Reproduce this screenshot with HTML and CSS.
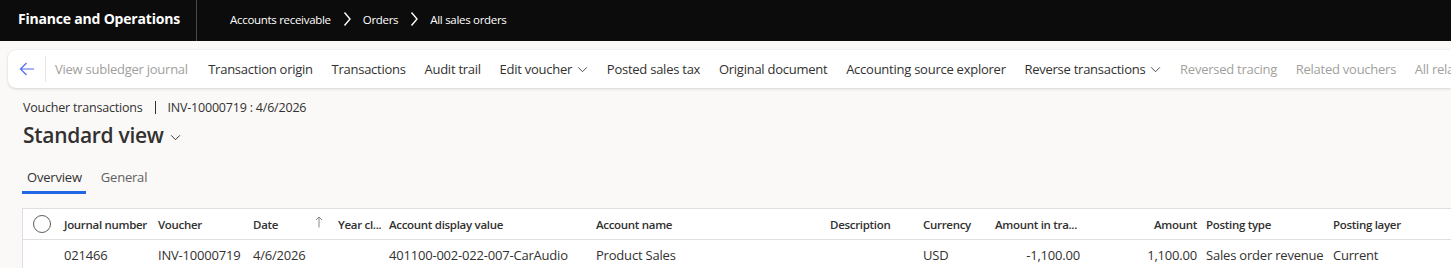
FILE: index.html
```html
<!DOCTYPE html>
<html lang="en">
<head>
<meta charset="utf-8">
<title>Voucher transactions</title>
<link rel="stylesheet" href="styles.css">
</head>
<body>
<header class="topbar">
  <div class="brand">Finance and Operations</div>
  <nav class="crumbs">
    <span>Accounts receivable</span>
    <svg class="crumb-chev" viewBox="0 0 8 16" width="8" height="16"><path d="M1.5 1.5 L7 8 L1.5 14.5" fill="none" stroke="#fff" stroke-width="1.4"/></svg>
    <span>Orders</span>
    <svg class="crumb-chev" viewBox="0 0 8 16" width="8" height="16"><path d="M1.5 1.5 L7 8 L1.5 14.5" fill="none" stroke="#fff" stroke-width="1.4"/></svg>
    <span>All sales orders</span>
  </nav>
</header>

<main class="page">
  <div class="toolbar">
    <button class="back" aria-label="Back">
      <svg viewBox="0 0 16 16" width="16" height="16"><path d="M15 8 H1.5 M7.5 2 L1.5 8 L7.5 14" fill="none" stroke="#4f6bed" stroke-width="1.2"/></svg>
    </button>
    <span class="tb-sep"></span>
    <span class="tb-item first disabled">View subledger journal</span>
    <span class="tb-item">Transaction origin</span>
    <span class="tb-item">Transactions</span>
    <span class="tb-item">Audit trail</span>
    <span class="tb-item">Edit voucher <svg class="dd" viewBox="0 0 12 8" width="11" height="7"><path d="M1 1.5 L6 6.5 L11 1.5" fill="none" stroke="#323130" stroke-width="1"/></svg></span>
    <span class="tb-item">Posted sales tax</span>
    <span class="tb-item">Original document</span>
    <span class="tb-item">Accounting source explorer</span>
    <span class="tb-item">Reverse transactions <svg class="dd" viewBox="0 0 12 8" width="11" height="7"><path d="M1 1.5 L6 6.5 L11 1.5" fill="none" stroke="#323130" stroke-width="1"/></svg></span>
    <span class="tb-item disabled">Reversed tracing</span>
    <span class="tb-item disabled">Related vouchers</span>
    <span class="tb-item disabled">All related vouchers</span>
  </div>

  <section class="head">
    <div class="caption">Voucher transactions <span class="bar" aria-hidden="true"></span> INV-10000719 : 4/6/2026</div>
    <h1 class="title">Standard view <svg class="title-chev" viewBox="0 0 12 8" width="11" height="7"><path d="M1 1.5 L6 6.5 L11 1.5" fill="none" stroke="#323130" stroke-width="1.1"/></svg></h1>
    <div class="tabs">
      <span class="tab active">Overview</span>
      <span class="tab">General</span>
    </div>
  </section>

  <div class="grid">
    <div class="row hdr">
      <div class="cell chk"><span class="circle"></span></div>
      <div class="cell">Journal number</div>
      <div class="cell">Voucher</div>
      <div class="cell date">Date <svg class="sort" viewBox="0 0 8 12" width="8" height="12"><path d="M4 11.5 V1 M1 4 L4 1 L7 4" fill="none" stroke="#8a8886" stroke-width="1"/></svg></div>
      <div class="cell">Year cl...</div>
      <div class="cell">Account display value</div>
      <div class="cell">Account name</div>
      <div class="cell">Description</div>
      <div class="cell">Currency</div>
      <div class="cell">Amount in tra...</div>
      <div class="cell num amt">Amount</div>
      <div class="cell">Posting type</div>
      <div class="cell">Posting layer</div>
    </div>
    <div class="row data">
      <div class="cell chk"></div>
      <div class="cell">021466</div>
      <div class="cell">INV-10000719</div>
      <div class="cell">4/6/2026</div>
      <div class="cell"></div>
      <div class="cell">401100-002-022-007-CarAudio</div>
      <div class="cell">Product Sales</div>
      <div class="cell"></div>
      <div class="cell">USD</div>
      <div class="cell num">-1,100.00</div>
      <div class="cell num amt">1,100.00</div>
      <div class="cell">Sales order revenue</div>
      <div class="cell">Current</div>
    </div>
  </div>
</main>
</body>
</html>
```

FILE: styles.css
```css
* { box-sizing: border-box; }
html, body { margin: 0; padding: 0; }
body {
  width: 1451px;
  height: 268px;
  overflow: hidden;
  background: #faf9f8;
  font-family: "Open Sans", "Noto Sans", sans-serif;
  color: #323130;
}

.topbar {
  height: 41px;
  background: #0c0c0c;
  display: flex;
  align-items: center;
  color: #fff;
}
.brand {
  font-weight: 700;
  font-size: 14px;
  padding-left: 18px;
  width: 197px;
  height: 41px;
  line-height: 38px;
  border-right: 1px solid #4a4a4a;
  letter-spacing: -0.2px;
  flex: none;
}
.crumbs {
  display: flex;
  align-items: center;
  gap: 12px;
  padding-left: 33px;
  font-size: 11.5px;
  letter-spacing: -0.3px;
  padding-bottom: 3px;
}
.crumb-chev { flex: none; }

.page { padding: 9px 0 0 8px; }

.toolbar {
  height: 38px;
  background: #fff;
  border-radius: 8px 0 0 8px;
  box-shadow: 0 1px 3px rgba(0,0,0,0.14), 0 0 1px rgba(0,0,0,0.1);
  display: flex;
  align-items: center;
  white-space: nowrap;
  overflow: hidden;
  font-size: 13px;
  letter-spacing: -0.25px;
}
.back {
  flex: none;
  border: 0;
  background: none;
  padding: 0;
  width: 36px;
  height: 24px;
  display: flex;
  align-items: center;
  justify-content: center;
  margin-left: 1px;
}
.tb-sep {
  flex: none;
  width: 1px;
  height: 26px;
  background: #e6e4e2;
}
.tb-item {
  padding: 0 9.35px;
  display: flex;
  align-items: center;
  gap: 5px;
  flex: none;
}
.tb-item.first { padding-left: 9px; padding-right: 11px; }
.tb-item.disabled { color: #a19f9d; }
.dd { margin-top: 1px; }

.head { padding-left: 15px; }
.caption {
  font-size: 12.5px;
  margin-top: 11px;
  letter-spacing: -0.2px;
  display: flex;
  align-items: center;
}
.caption .bar {
  display: inline-block;
  width: 1px;
  height: 13px;
  background: #323130;
  margin: 0 12px 0 12px;
}
.title {
  margin: 5px 0 0;
  font-size: 21px;
  font-weight: 600;
  letter-spacing: -0.3px;
  display: flex;
  align-items: center;
  gap: 6px;
}
.title-chev { margin-top: 5px; }
.tabs {
  display: flex;
  margin-top: 19px;
  font-size: 13px;
  letter-spacing: -0.2px;
}
.tab {
  padding: 0 8px 5px 4px;
  margin-right: 11px;
  color: #605e5c;
  border-bottom: 3px solid transparent;
}
.tab.active {
  color: #323130;
  border-bottom-color: #2266e3;
  padding-left: 5px;
  padding-right: 4px;
  margin-left: -1px;
}

.grid {
  margin-top: 14px;
  margin-left: 14px;
  background: #fff;
  border-top: 1px solid #e1dfdd;
  border-left: 1px solid #e1dfdd;
}
.row {
  display: grid;
  grid-template-columns: 33px 94px 95px 85px 51px 207px 234px 93px 72px 101px 110px 127px 1fr;
  align-items: center;
  white-space: nowrap;
}
.row.hdr {
  height: 31px;
  font-size: 11.5px;
  font-weight: 600;
  border-bottom: 1px solid #e1dfdd;
  letter-spacing: -0.3px;
}
.row.data {
  height: 30px;
  font-size: 13px;
  letter-spacing: -0.2px;
}
.cell {
  padding-left: 8px;
  overflow: hidden;
}
.cell.chk { padding-left: 10px; display: flex; align-items: center; }
.circle {
  width: 18px;
  height: 18px;
  border: 1px solid #605e5c;
  border-radius: 50%;
}
.cell.date {
  display: flex;
  justify-content: space-between;
  align-items: center;
  padding-right: 7px;
}
.sort { flex: none; margin-top: -4px; }
.cell.num { text-align: right; padding-right: 8px; }
.cell.num.amt { padding-right: 1px; }
```
